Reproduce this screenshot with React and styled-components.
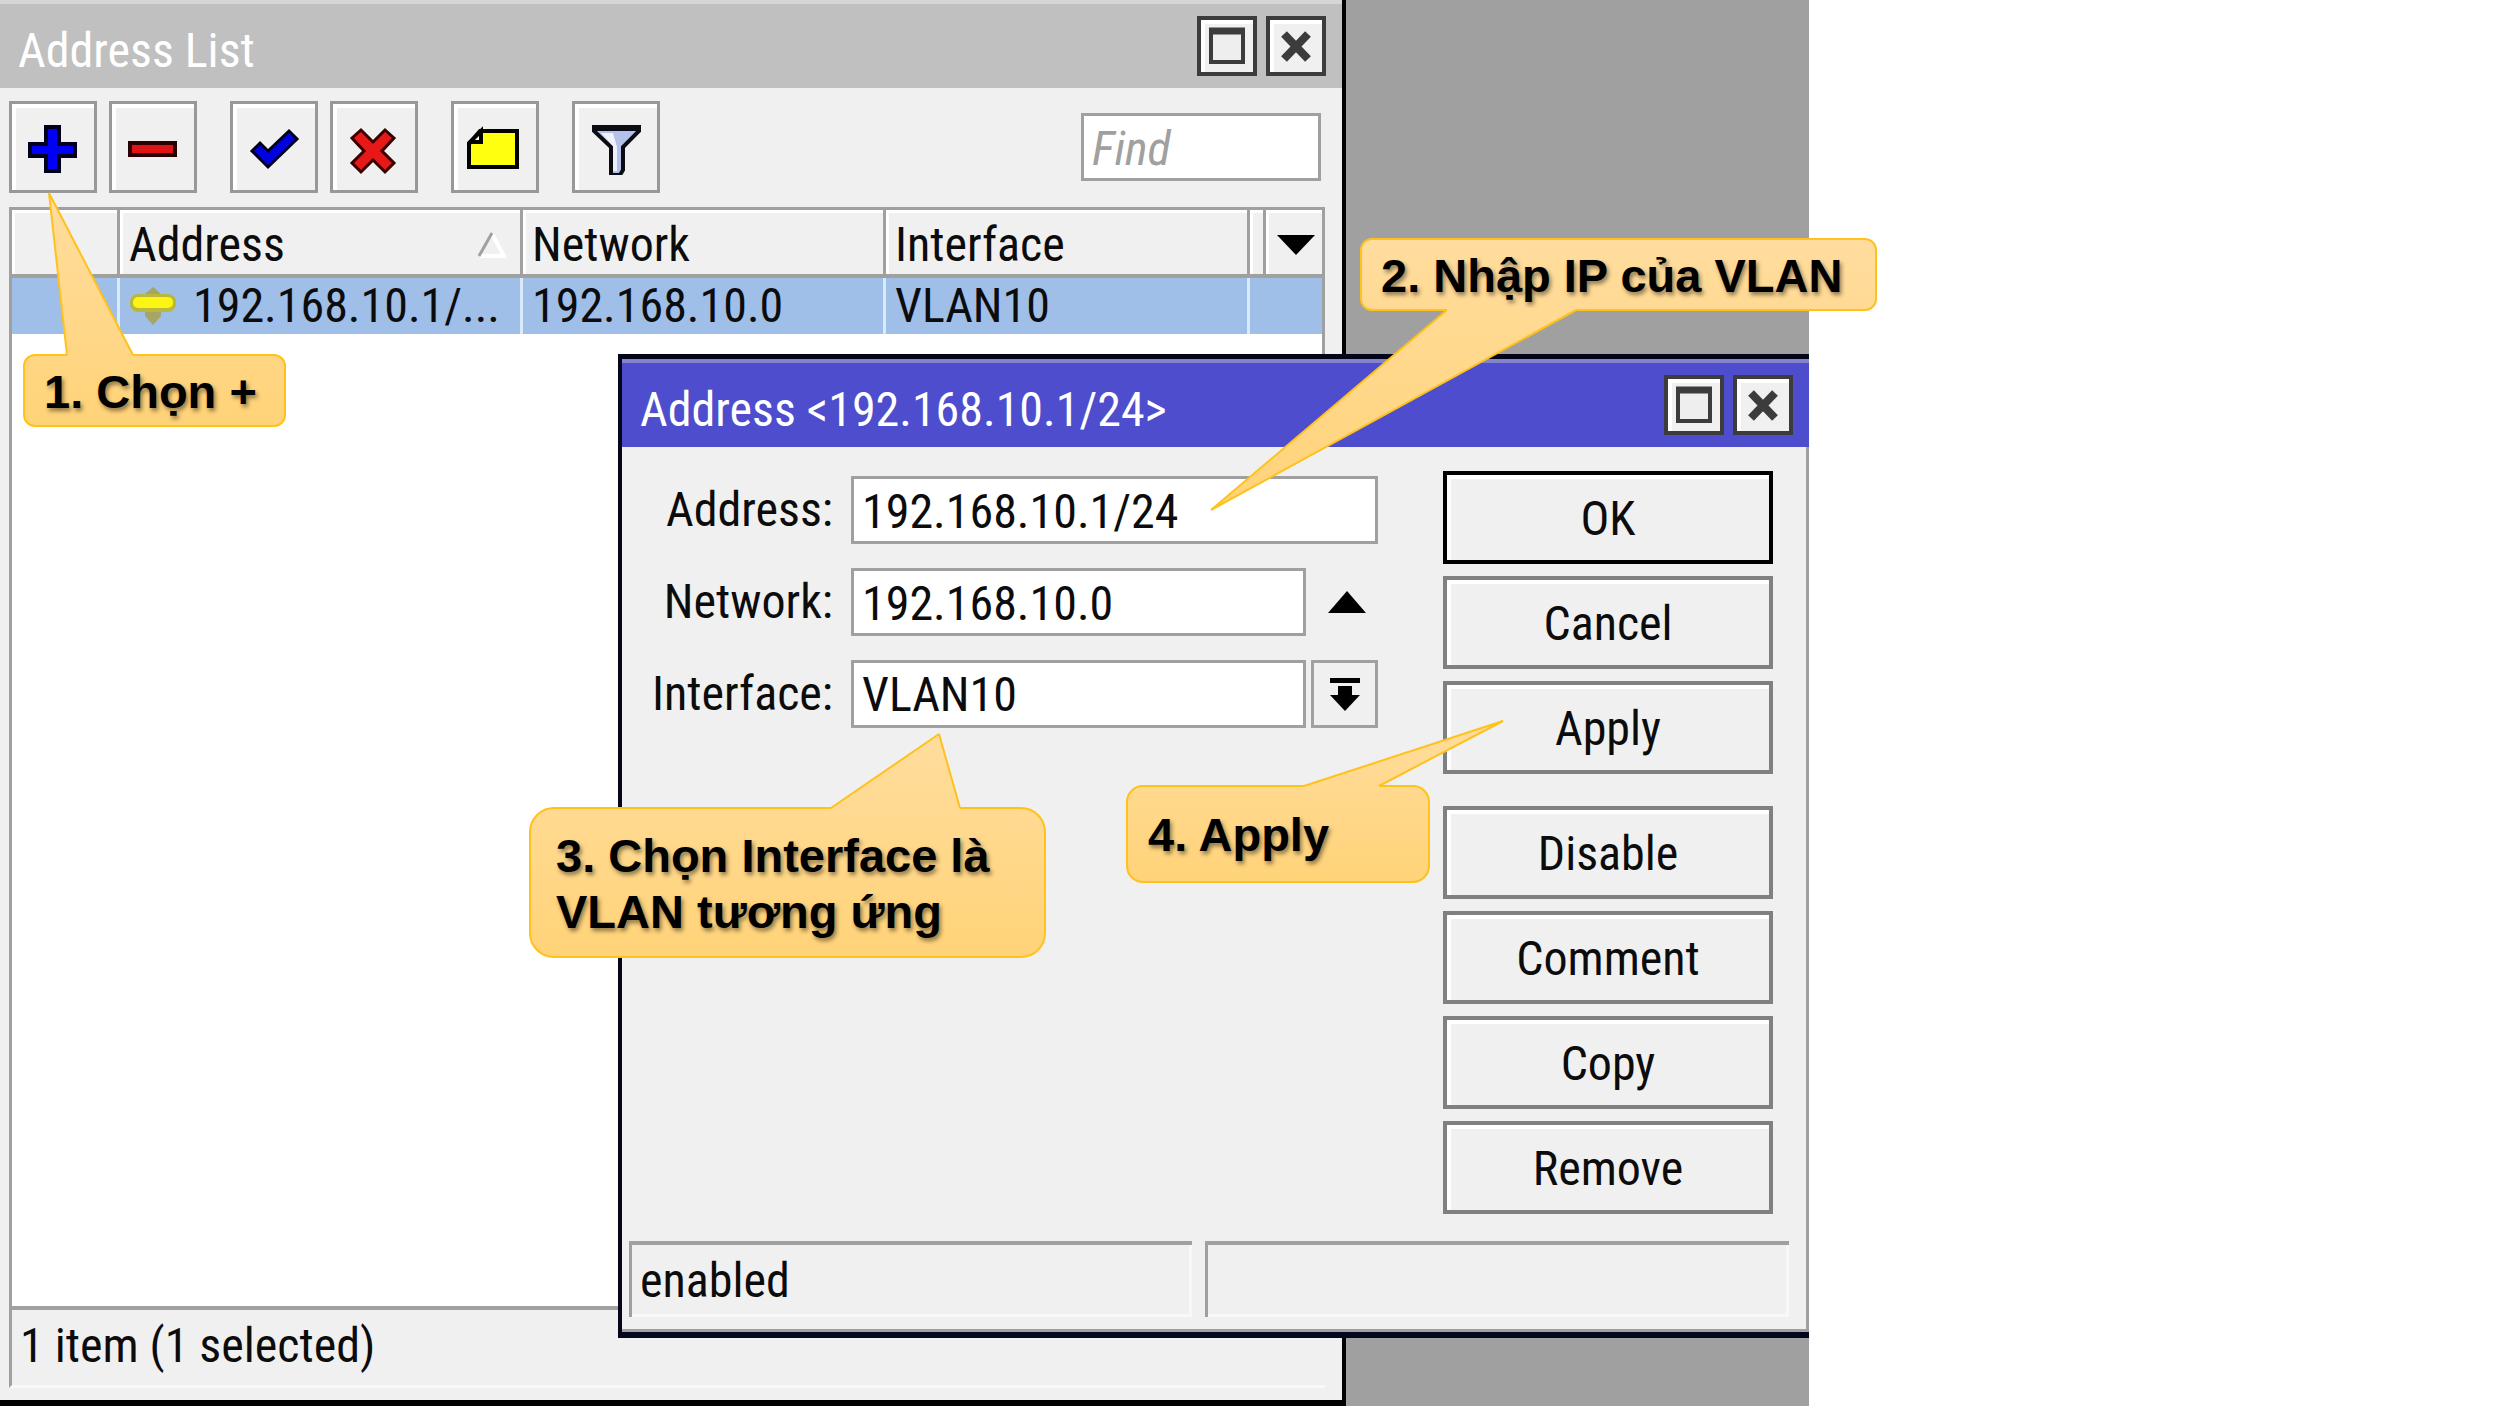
import React from 'react';
import styled, { createGlobalStyle, css } from 'styled-components';

const UI_FONT = '"Roboto Condensed", "Arial Narrow", Roboto, sans-serif';
const NOTE_FONT = '"Liberation Sans", Arial, sans-serif';

const GlobalStyle = createGlobalStyle`
  *, *::before, *::after { box-sizing: border-box; }
  body { margin: 0; background: #ffffff; }
  button, input, select { font: inherit; color: inherit; border-radius: 0; margin: 0; }
`;

const Slide = styled.main`
  position: relative;
  display: grid;
  grid-template-columns: minmax(0, 1809fr) minmax(0, 691fr);
  min-height: 100vh;
  overflow: hidden;
  font-family: ${UI_FONT};
  font-size: 48px;
  line-height: 56px;
  color: #0c0c0c;
`;

const Desktop = styled.div`
  position: relative;
  overflow: hidden;
  background: #a0a0a0;
`;

const ListWindow = styled.section`
  position: absolute;
  inset: 0 auto 0 0;
  width: 1346px;
  display: flex;
  flex-direction: column;
  background: #f0f0f0;
  border-right: 4px solid #000000;
  border-bottom: 6px solid #000000;
`;

const DialogWindow = styled.section`
  position: absolute;
  left: 618px;
  right: 0;
  top: 354px;
  background: #f0f0f0;
  border: solid #05051c;
  border-width: 5px 0 6px 4px;
  box-shadow: inset -3px -3px 0 #a0a0a0;
`;

const TitleBar = styled.header`
  display: flex;
  align-items: flex-start;
  gap: 9px;
  height: 88px;
  padding: 12px 16px 0 18px;
  border-top: 4px solid ${(p) => (p.$active ? '#8484cc' : '#d6d6d6')};
  background: ${(p) => (p.$active ? '#4d4dcd' : '#c0c0c0')};
  color: #ffffff;
`;

const Title = styled.h1`
  flex: 1;
  margin: 0;
  font-size: inherit;
  font-weight: 400;
  line-height: 70px;
`;

const raised = css`
  display: flex;
  align-items: center;
  justify-content: center;
  padding: 0;
  background: #f0f0f0;
  box-shadow: inset 4px 4px 0 #ffffff;
`;

const CaptionButton = styled.button`
  ${raised}
  width: 60px;
  height: 60px;
  border: 4px solid #3c3c3c;
`;

const Toolbar = styled.div`
  display: flex;
  align-items: center;
  gap: 33px;
  padding: 13px 21px 14px 9px;
`;

const ToolGroup = styled.div`
  display: flex;
  gap: 12px;
`;

const ToolButton = styled.button`
  ${raised}
  width: 88px;
  height: 92px;
  border: 3px solid #989898;
`;

const boxed = css`
  height: 68px;
  border: 3px solid #a0a0a0;
  background: #ffffff;
  padding: 2px 8px 0;
  outline: none;
`;

const FindBox = styled.input`
  ${boxed}
  width: 240px;
  margin-left: auto;
  &::placeholder { color: #a0a0a0; font-style: italic; opacity: 1; }
`;

const ListFrame = styled.div`
  flex: 1;
  margin: 0 17px 0 9px;
  border: solid #a0a0a0;
  border-width: 3px 3px 4px 3px;
  background: #ffffff;
`;

const AddressTable = styled.table`
  width: 100%;
  table-layout: fixed;
  border-collapse: separate;
  border-spacing: 0;
`;

const Col = styled.col`
  width: ${(p) => p.$width};
`;

const HeadCell = styled.th`
  height: 68px;
  padding: 6px 0 0 9px;
  border-right: ${(p) => (p.$last ? '0' : '3px solid #a0a0a0')};
  border-bottom: 4px solid #a0a0a0;
  background: #f0f0f0;
  box-shadow: inset 3px 3px 0 #ffffff;
  font-weight: 400;
  text-align: left;
`;

const HeadLabel = styled.div`
  display: flex;
  align-items: center;
  justify-content: space-between;
  padding-right: 14px;
`;

const MenuButton = styled.button`
  display: flex;
  padding: 0;
  margin-left: 2px;
  border: 0;
  background: none;
`;

const Cell = styled.td`
  height: 56px;
  padding: 0 0 0 9px;
  border-right: ${(p) => (p.$last ? '0' : '3px solid #d9ebfb')};
  background: #9fbee8;
  line-height: 52px;
  white-space: nowrap;
`;

const CellRow = styled.div`
  display: flex;
  align-items: center;
  gap: 16px;
`;

const ListStatus = styled.footer`
  height: 78px;
  margin: 0 17px 12px 9px;
  padding: 8px 0 0 8px;
  border-left: 3px solid #a0a0a0;
  border-bottom: 3px solid #f8f8f8;
`;

const DialogBody = styled.form`
  display: flex;
  align-items: flex-start;
  gap: 65px;
  padding: 24px 36px 27px 0;
`;

const Fields = styled.div`
  flex: 1;
  min-width: 0;
  display: flex;
  flex-direction: column;
  gap: 24px;
  padding-top: 5px;
`;

const Field = styled.div`
  display: flex;
  gap: 5px;
`;

const FieldLabel = styled.label`
  flex: none;
  width: 211px;
  margin-right: 13px;
  line-height: 68px;
  text-align: right;
`;

const TextBox = styled.input`
  ${boxed}
  flex: 1;
  min-width: 0;
`;

const SelectBox = styled.select`
  ${boxed}
  flex: 1;
  min-width: 0;
  appearance: none;
`;

const SideButton = styled.button`
  display: flex;
  align-items: center;
  justify-content: center;
  width: 67px;
  height: 68px;
  padding: 0 0 0 ${(p) => (p.$flat ? 4 : 0)}px;
  border: 3px solid ${(p) => (p.$flat ? 'transparent' : '#a0a0a0')};
  background: #f0f0f0;
`;

const Actions = styled.div`
  flex: none;
  display: flex;
  flex-direction: column;
  gap: 32px;
  width: 330px;
`;

const ActionGroup = styled.div`
  display: flex;
  flex-direction: column;
  gap: 12px;
`;

const ActionButton = styled.button`
  ${raised}
  height: 93px;
  padding-top: 2px;
  border: 4px solid ${(p) => (p.$primary ? '#000000' : '#808080')};
`;

const DialogStatus = styled.footer`
  display: flex;
  gap: 13px;
  padding: 0 20px 15px 7px;
`;

const StatusPane = styled.div`
  flex: ${(p) => p.$grow} 1 0;
  height: 76px;
  padding: 8px 0 0 8px;
  border: solid #a0a0a0;
  border-width: 4px 0 0 3px;
  box-shadow: inset -3px -3px 0 #f8f8f8;
`;

/* Speech-bubble annotations lying over the windows */
const CalloutBox = styled.aside`
  position: absolute;
  left: ${(p) => p.$x}px;
  top: ${(p) => p.$y}px;
  width: ${(p) => p.$w}px;
  height: ${(p) => p.$h}px;
  display: flex;
  align-items: center;
  padding-left: ${(p) => p.$pad}px;
  border: 2px solid #ffc21c;
  border-radius: ${(p) => p.$radius}px;
  background: linear-gradient(${(p) => p.$from}, ${(p) => p.$to});
  font-family: ${NOTE_FONT};
  font-size: 47px;
  font-weight: 700;
  line-height: 56px;
  color: #000000;
  text-shadow: 2px 3px 4px rgba(0, 0, 0, 0.45);
`;

const CalloutText = styled.p`
  margin: 0;
  padding-top: 2px;
  white-space: pre-line;
`;

const Tail = styled.svg`
  position: absolute;
  left: -2px;
  top: -2px;
  overflow: visible;
  pointer-events: none;
`;

const Glyph = styled.svg`
  flex: none;
  display: block;
`;

const START = [255, 221, 158];
const END = [255, 211, 120];
const blend = (t) => `rgb(${START.map((s, i) => Math.round(s + (END[i] - s) * t)).join(',')})`;

function Callout({ id, x, y, w, h, pad, radius, base, tip, children }) {
  const down = tip[1] > y;
  const top = down ? y : tip[1];
  const bottom = down ? tip[1] : y + h;
  const at = (v) => blend((v - top) / (bottom - top));
  const edge = down ? h - 1 : 1;
  const inner = down ? h - 3 : 3;
  const tx = tip[0] - x;
  const ty = tip[1] - y;
  const a = base[0] - x;
  const b = base[1] - x;
  return (
    <CalloutBox $x={x} $y={y} $w={w} $h={h} $pad={pad} $radius={radius} $from={at(y)} $to={at(y + h)}>
      <Tail width={w} height={h} aria-hidden="true">
        <defs>
          <linearGradient id={id} gradientUnits="userSpaceOnUse" x1="0" x2="0" y1={top - y} y2={bottom - y}>
            <stop offset="0" stopColor={blend(0)} />
            <stop offset="1" stopColor={blend(1)} />
          </linearGradient>
        </defs>
        <path d={`M${a} ${inner}V${edge}L${tx} ${ty}L${b} ${edge}V${inner}Z`} fill={`url(#${id})`} />
        <path d={`M${a} ${edge}L${tx} ${ty}L${b} ${edge}`} fill="none" stroke="#ffc21c" strokeWidth="2" strokeLinejoin="bevel" />
      </Tail>
      <CalloutText>{children}</CalloutText>
    </CalloutBox>
  );
}

const Icon = ({ size = 56, h = size, children }) => (
  <Glyph width={size} height={h} viewBox={`0 0 ${size} ${h}`} aria-hidden="true">{children}</Glyph>
);

const PlusIcon = () => (
  <Icon><path d="M21 8h13v17h16v12H34v15H21V37H5V25h16z" fill="#0000f4" stroke="#00001c" strokeWidth="4" /></Icon>
);
const MinusIcon = () => (
  <Icon><path d="M5 24h45v12H5z" fill="#e01414" stroke="#2c0000" strokeWidth="4" /></Icon>
);
const CheckIcon = () => (
  <Icon><path d="M6 32l8-8 8 8 21-20 8 8-29 28z" fill="#0000e0" stroke="#00001c" strokeWidth="3" /></Icon>
);
const CrossIcon = () => (
  <Icon><path d="M15 11l12 12 12-12 9 8-12 13 12 12-9 9-12-12-12 12-9-9 12-12L6 19z" fill="#e61818" stroke="#3a0000" strokeWidth="3" /></Icon>
);
const NoteIcon = () => (
  <Icon>
    <path d="M13 12h37v36H2V25z" fill="#ffff10" stroke="#000000" strokeWidth="4" />
    <path d="M14 12v11H3z" fill="#fffbd0" stroke="#000000" strokeWidth="4" />
  </Icon>
);
const FunnelIcon = () => (
  <Icon>
    <path d="M6 9h45v3L35 28v23l-3 5h-9V28L6 12z" fill="#b4c2ea" stroke="#0c0c14" strokeWidth="4" />
    <path d="M13 14h12l4 14v24h-4V27z" fill="#eef2ff" />
    <path d="M4 9h49" stroke="#0c0c14" strokeWidth="6" />
  </Icon>
);
const MaximizeIcon = () => (
  <Icon size={38}><path d="M3 5h32v30H3z" fill="#eeeeee" stroke="#3c3c3c" strokeWidth="4" /><path d="M1 4h36" stroke="#3c3c3c" strokeWidth="7" /></Icon>
);
const CloseIcon = () => (
  <Icon size={38}><path d="M7 7l24 25M31 7L7 32" stroke="#3c3c3c" strokeWidth="8" /></Icon>
);
const SortIcon = () => (
  <Icon size={28} h={26}><path d="M14 2l12 22H2" fill="none" stroke="#ffffff" strokeWidth="4" /><path d="M1 24L14 1" stroke="#a0a0a0" strokeWidth="3" /></Icon>
);
const DownTriangle = () => (
  <Icon size={38} h={20}><path d="M0 0h38L19 20z" fill="#000000" /></Icon>
);
const UpTriangle = () => (
  <Icon size={38} h={22}><path d="M0 22h38L19 0z" fill="#000000" /></Icon>
);
const DropArrow = () => (
  <Icon size={30} h={34}><path d="M0 1h30v5H0zM8 9h14v9h8L15 34 0 18h8z" fill="#000000" /></Icon>
);
const AddressIcon = () => (
  <Icon size={48} h={40}>
    <path d="M16 8l8-7 8 7v22l-8 9-8-9z" fill="#a5a564" />
    <rect x="1" y="8" width="46" height="18" rx="8" fill="#b8b83c" />
    <rect x="4" y="11" width="40" height="11" rx="5" fill="#fcf412" />
  </Icon>
);

const TOOLS = [
  [['Add', PlusIcon], ['Remove', MinusIcon]],
  [['Enable', CheckIcon], ['Disable', CrossIcon]],
  [['Comment', NoteIcon]],
  [['Filter', FunnelIcon]],
];

const ACTIONS = [['OK', 'Cancel', 'Apply'], ['Disable', 'Comment', 'Copy', 'Remove']];

function WindowTitle({ active, children }) {
  return (
    <TitleBar $active={active}>
      <Title>{children}</Title>
      <CaptionButton type="button" aria-label="Maximize"><MaximizeIcon /></CaptionButton>
      <CaptionButton type="button" aria-label="Close"><CloseIcon /></CaptionButton>
    </TitleBar>
  );
}

function AddressList() {
  return (
    <ListWindow aria-label="Address List">
      <WindowTitle>Address List</WindowTitle>
      <Toolbar>
        {TOOLS.map((group) => (
          <ToolGroup key={group[0][0]}>
            {group.map(([name, ToolIcon]) => (
              <ToolButton key={name} type="button" aria-label={name}><ToolIcon /></ToolButton>
            ))}
          </ToolGroup>
        ))}
        <FindBox type="text" placeholder="Find" aria-label="Find" />
      </Toolbar>
      <ListFrame>
        <AddressTable>
          <colgroup>
            <Col $width="108px" />
            <Col $width="403px" />
            <Col $width="363px" />
            <Col $width="364px" />
            <Col $width="16px" />
            <Col $width="auto" />
          </colgroup>
          <thead>
            <tr>
              <HeadCell aria-label="Flags" />
              <HeadCell scope="col"><HeadLabel>Address<SortIcon /></HeadLabel></HeadCell>
              <HeadCell scope="col">Network</HeadCell>
              <HeadCell scope="col">Interface</HeadCell>
              <HeadCell aria-hidden="true" />
              <HeadCell $last>
                <MenuButton type="button" aria-label="Columns"><DownTriangle /></MenuButton>
              </HeadCell>
            </tr>
          </thead>
          <tbody>
            <tr>
              <Cell />
              <Cell><CellRow><AddressIcon />192.168.10.1/...</CellRow></Cell>
              <Cell>192.168.10.0</Cell>
              <Cell>VLAN10</Cell>
              <Cell colSpan={2} $last />
            </tr>
          </tbody>
        </AddressTable>
      </ListFrame>
      <ListStatus>1 item (1 selected)</ListStatus>
    </ListWindow>
  );
}

function AddressDialog() {
  return (
    <DialogWindow role="dialog" aria-label="Address">
      <WindowTitle active>{'Address <192.168.10.1/24>'}</WindowTitle>
      <DialogBody onSubmit={(e) => e.preventDefault()}>
        <Fields>
          <Field>
            <FieldLabel htmlFor="address">Address:</FieldLabel>
            <TextBox id="address" type="text" defaultValue="192.168.10.1/24" />
          </Field>
          <Field>
            <FieldLabel htmlFor="network">Network:</FieldLabel>
            <TextBox id="network" type="text" defaultValue="192.168.10.0" />
            <SideButton type="button" $flat aria-label="Collapse network"><UpTriangle /></SideButton>
          </Field>
          <Field>
            <FieldLabel htmlFor="interface">Interface:</FieldLabel>
            <SelectBox id="interface" defaultValue="VLAN10">
              <option>VLAN10</option>
            </SelectBox>
            <SideButton type="button" aria-label="Open interface list"><DropArrow /></SideButton>
          </Field>
        </Fields>
        <Actions>
          {ACTIONS.map((group) => (
            <ActionGroup key={group[0]}>
              {group.map((name) => (
                <ActionButton key={name} type="button" $primary={name === 'OK'}>{name}</ActionButton>
              ))}
            </ActionGroup>
          ))}
        </Actions>
      </DialogBody>
      <DialogStatus>
        <StatusPane $grow={563}>enabled</StatusPane>
        <StatusPane $grow={584} />
      </DialogStatus>
    </DialogWindow>
  );
}

export default function App() {
  return (
    <>
      <GlobalStyle />
      <Slide>
        <Desktop>
          <AddressList />
          <AddressDialog />
        </Desktop>
        <Callout id="tail-add" x={23} y={354} w={263} h={73} pad={19} radius={12} base={[67, 133]} tip={[49, 193]}>
          1. Chọn +
        </Callout>
        <Callout id="tail-ip" x={1360} y={238} w={517} h={73} pad={19} radius={12} base={[1447, 1576]} tip={[1211, 510]}>
          2. Nhập IP của VLAN
        </Callout>
        <Callout id="tail-interface" x={529} y={807} w={517} h={151} pad={25} radius={25} base={[831, 960]} tip={[939, 734]}>
          {'3. Chọn Interface là\nVLAN tương ứng'}
        </Callout>
        <Callout id="tail-apply" x={1126} y={785} w={304} h={98} pad={20} radius={17} base={[1304, 1379]} tip={[1503, 721]}>
          4. Apply
        </Callout>
      </Slide>
    </>
  );
}
